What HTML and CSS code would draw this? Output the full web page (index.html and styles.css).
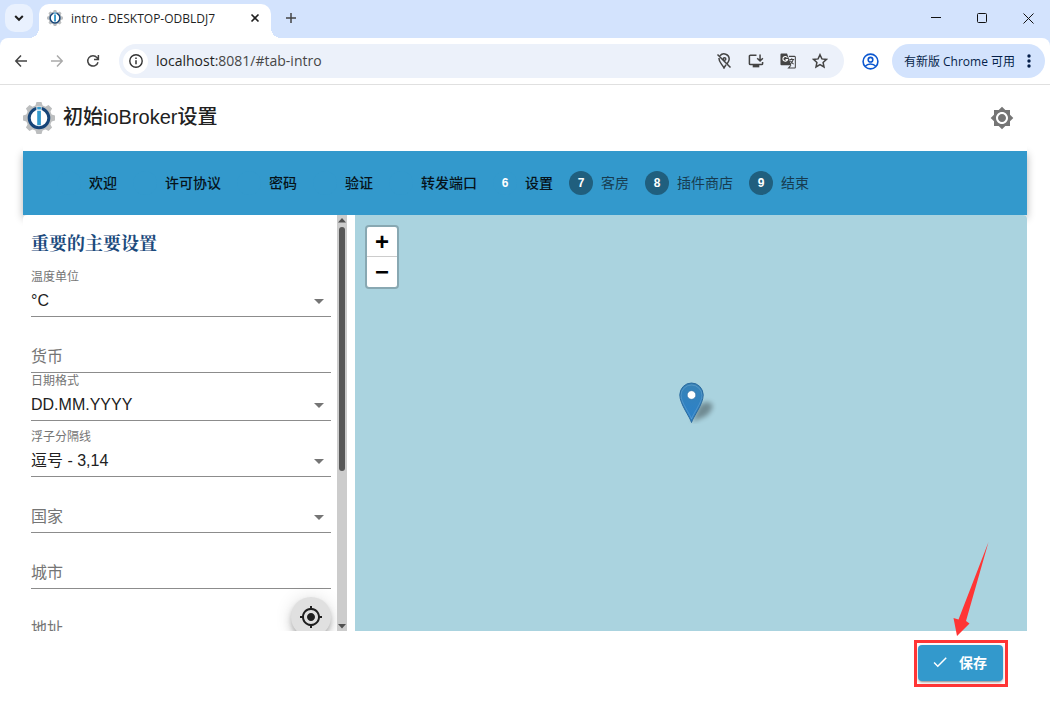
FILE: index.html
```
<!DOCTYPE html>
<html lang="zh-CN">
<head>
<meta charset="utf-8">
<title>intro - DESKTOP-ODBLDJ7</title>
<link rel="stylesheet" href="styles.css">
</head>
<body>
<svg class="defs" aria-hidden="true">
  <symbol id="logo" viewBox="0 0 32 32">
    <g fill="#bcbebf">
      <circle cx="16" cy="16" r="13"/>
      <path d="M12 5l1.500-5h5L20 5zM12 27l1.500 5h5l1.500-5z"/>
      <path transform="rotate(45 16 16)" d="M12 5l1.500-5h5L20 5zM12 27l1.500 5h5l1.500-5z"/>
      <path transform="rotate(90 16 16)" d="M12 5l1.500-5h5L20 5zM12 27l1.500 5h5l1.500-5z"/>
      <path transform="rotate(135 16 16)" d="M12 5l1.500-5h5L20 5zM12 27l1.500 5h5l1.500-5z"/>
    </g>
    <circle cx="16" cy="16" r="9.800" fill="#fff" stroke="#164477" stroke-width="3"/>
    <path d="M13.400 4.500h5.200v5h-5.200z" fill="#fff"/>
    <path d="M14.200 5h3.700v2.400h-3.700zM14.200 8.800h3.700v14.400h-3.700z" fill="#3399cc"/>
  </symbol>
</svg>

<header class="browser">
  <div class="tabbar">
    <button class="tab-search" aria-label="搜索标签页"><svg width="12" height="12" viewBox="0 0 12 12"><path d="M2.2 4L6 7.8 9.8 4" fill="none" stroke="#1f1f1f" stroke-width="2"/></svg></button>
    <div class="tab">
      <svg width="16" height="16"><use href="#logo"/></svg>
      <span class="tab-title">intro - DESKTOP-ODBLDJ7</span>
      <button class="bare" aria-label="关闭标签页"><svg width="10" height="10" viewBox="0 0 10 10"><path d="M1.500 1.500l7 7M8.500 1.500l-7 7" stroke="#1f1f1f" stroke-width="1.600"/></svg></button>
    </div>
    <button class="bare new-tab" aria-label="新标签页"><svg width="12" height="12" viewBox="0 0 12 12"><path d="M6 1v10M1 6h10" stroke="#444" stroke-width="1.500"/></svg></button>
    <div class="window-buttons">
      <button class="bare" aria-label="最小化"><svg width="10" height="10"><path d="M0 4.500h10" stroke="#111"/></svg></button>
      <button class="bare" aria-label="最大化"><svg width="10" height="10"><rect x=".5" y=".5" width="9" height="9" rx="1" fill="none" stroke="#111"/></svg></button>
      <button class="bare" aria-label="关闭"><svg width="11" height="11"><path d="M.5.5l10 10M10.500.500l-10 10" stroke="#111"/></svg></button>
    </div>
  </div>
  <div class="toolbar">
    <nav class="nav">
      <button class="bare" aria-label="后退"><svg width="14" height="14" viewBox="0 0 14 14"><path d="M7 1.500L1.800 7 7 12.500M2 7h11" fill="none" stroke="#444" stroke-width="1.500"/></svg></button>
      <button class="bare" aria-label="前进"><svg width="14" height="14" viewBox="0 0 14 14"><path d="M7 1.500L12.200 7 7 12.500M12 7H1" fill="none" stroke="#aaa" stroke-width="1.500"/></svg></button>
      <button class="bare" aria-label="重新加载"><svg width="14" height="14" viewBox="0 0 14 14"><path d="M12 8.200A5.200 5.200 0 1 1 11 3.600L12 5M12.400 1v4.400H8" fill="none" stroke="#444" stroke-width="1.500"/></svg></button>
    </nav>
    <div class="omnibox">
      <button class="bare site-info" aria-label="网站信息"><svg width="14" height="14" viewBox="0 0 14 14"><circle cx="7" cy="7" r="6.200" fill="none" stroke="#333" stroke-width="1.400"/><path d="M7 6.200v4M7 3.500v1.600" stroke="#333" stroke-width="1.500"/></svg></button>
      <span class="url"><b>localhost</b>:8081/#tab-intro</span>
      <button class="bare" aria-label="位置"><svg width="16" height="16" viewBox="0 0 16 16" fill="none" stroke="#444" stroke-width="1.500"><path d="M4 2.800A5.200 5.200 0 0 1 13.200 6c0 1.700-.8 3-1.800 4.400M3 5c-.4 4 3 5.800 5 10 .6-1.300 1.300-2.300 2-3.300M1.500 1.500l13 13"/><circle cx="8.500" cy="6" r="1.300"/></svg></button>
      <button class="bare" aria-label="安装"><svg width="16" height="16" viewBox="0 0 17 16" fill="none" stroke="#444" stroke-width="1.600"><path d="M9 1.800H2.500a1 1 0 0 0-1 1v8a1 1 0 0 0 1 1h12a1 1 0 0 0 1-1V9M12.800 1v6.500M9.800 5l3 3 3-3"/><path d="M5 13.500h7" stroke-width="2.500"/></svg></button>
      <button class="bare" aria-label="翻译"><svg width="16" height="16" viewBox="0 0 17 17"><path d="M1.500.5h6L12 13H1.500a1 1 0 0 1-1-1V1.500a1 1 0 0 1 1-1z" fill="#444"/><path d="M7.800 5A2.500 2.500 0 1 0 8 7H5.800" fill="none" stroke="#fff" stroke-width="1.200"/><path d="M9.500 3.600h6a.8.8 0 0 1 .8.8v10.800a.8.8 0 0 1-.8.8H9l2.600-3M10 7h5M12.500 5.500V7M14 7c-.5 2-1.700 3.500-3 4.500M11 8.200c.8 1.500 2 2.700 3.500 3.600" fill="none" stroke="#444" stroke-width="1.100"/></svg></button>
      <button class="bare" aria-label="收藏"><svg width="16" height="16" viewBox="0 0 16 16"><path d="M8 1.700l1.900 4.200 4.600.5-3.400 3.100.9 4.500L8 11.700 4 14l.9-4.500L1.500 6.400l4.600-.5z" fill="none" stroke="#444" stroke-width="1.500"/></svg></button>
    </div>
    <button class="bare profile" aria-label="个人资料"><svg width="17" height="17" viewBox="0 0 17 17" fill="none" stroke="#0b57d0" stroke-width="1.600"><circle cx="8.500" cy="8.500" r="7.400"/><circle cx="8.500" cy="6.700" r="2.300"/><path d="M3.300 13.300c2.500-3 7.900-3 10.400 0"/></svg></button>
    <button class="update"><span>有新版 Chrome 可用</span><svg width="4" height="16" fill="#041e49"><circle cx="2" cy="3" r="1.700"/><circle cx="2" cy="8" r="1.700"/><circle cx="2" cy="13" r="1.700"/></svg></button>
  </div>
</header>

<main class="page">
  <div class="page-head">
    <svg width="32" height="32"><use href="#logo"/></svg>
    <h1>初始ioBroker设置</h1>
    <button class="bare" aria-label="主题"><svg width="24" height="24" viewBox="0 0 24 24" fill="#757575"><path d="M20 15.310L23.310 12 20 8.690V4h-4.690L12 .69 8.690 4H4v4.690L.69 12 4 15.310V20h4.690L12 23.310 15.310 20H20v-4.690zM12 18c-3.310 0-6-2.690-6-6s2.690-6 6-6 6 2.690 6 6-2.690 6-6 6zm0-10c-2.210 0-4 1.790-4 4s1.790 4 4 4 4-1.790 4-4-1.790-4-4-4z"/></svg></button>
  </div>

  <section class="card">
    <ol class="stepper">
      <li class="done"><i></i>欢迎</li>
      <li class="done"><i></i>许可协议</li>
      <li class="done"><i></i>密码</li>
      <li class="done"><i></i>验证</li>
      <li class="done"><i></i>转发端口</li>
      <li class="active" aria-current="step"><i>6</i>设置</li>
      <li><i>7</i>客房</li>
      <li><i>8</i>插件商店</li>
      <li><i>9</i>结束</li>
    </ol>

    <div class="content">
      <form class="form" id="settings">
        <h2>重要的主要设置</h2>
        <div class="field"><label for="temp">温度单位</label><select id="temp"><option>°C</option></select></div>
        <div class="field empty flush"><label for="currency">货币</label><input id="currency" type="text"></div>
        <div class="field"><label for="date">日期格式</label><select id="date"><option>DD.MM.YYYY</option></select></div>
        <div class="field"><label for="float">浮子分隔线</label><select id="float"><option>逗号 - 3,14</option></select></div>
        <div class="field empty"><label for="country">国家</label><select id="country"><option></option></select></div>
        <div class="field empty"><label for="city">城市</label><input id="city" type="text"></div>
        <div class="address">
          <div class="field empty"><label for="address">地址</label><input id="address" type="text"></div>
          <button type="button" class="locate" aria-label="定位"><svg width="24" height="24" viewBox="0 0 24 24" fill="#1f1f1f"><path d="M12 8c-2.210 0-4 1.790-4 4s1.790 4 4 4 4-1.790 4-4-1.790-4-4-4zm8.940 3c-.46-4.170-3.770-7.480-7.940-7.940V1h-2v2.060C6.830 3.520 3.520 6.830 3.060 11H1v2h2.060c.46 4.170 3.770 7.480 7.940 7.940V23h2v-2.060c4.170-.46 7.480-3.770 7.940-7.940H23v-2h-2.060zM12 19c-3.870 0-7-3.130-7-7s3.130-7 7-7 7 3.130 7 7-3.130 7-7 7z"/></svg></button>
        </div>
      </form>
      <div class="scrollbar" aria-hidden="true">
        <svg width="8" height="12"><path d="M0 7.500L4 3l4 4.500z" fill="#505050"/></svg>
        <div class="track"><div class="thumb"></div></div>
        <svg width="8" height="10"><path d="M0 3l4 4.500L8 3z" fill="#505050"/></svg>
      </div>
      <div class="map">
        <div class="zoom"><button aria-label="放大">+</button><button aria-label="缩小">−</button></div>
        <svg class="marker" width="42" height="42" viewBox="0 0 42 42">
          <defs>
            <linearGradient id="pin" x1="0" y1="0" x2="0" y2="1"><stop offset="0" stop-color="#3883b7"/><stop offset="1" stop-color="#2a81cb"/></linearGradient>
            <filter id="soft" x="-50%" y="-50%" width="200%" height="200%"><feGaussianBlur stdDeviation="2.500"/></filter>
          </defs>
          <path d="M13 40L20 24q7-7 13-2 2 5-6 12z" fill="#000" opacity=".34" filter="url(#soft)"/>
          <path d="M12.500 40.500C11 35 .8 22 .8 13a11.700 12 0 0 1 23.400 0C24.200 22 14 35 12.500 40.500z" fill="url(#pin)" stroke="#2b6a9e"/>
          <path d="M12.500 37C10.500 31 2 20.500 2 13.500a10.500 10.500 0 0 1 21 0C23 20.500 14.500 31 12.500 37z" fill="none" stroke="#fff" stroke-opacity=".15"/>
          <circle cx="12.500" cy="13" r="4.300" fill="#fff" stroke="#2b6a9e" stroke-width=".6"/>
        </svg>
      </div>
    </div>

    <footer class="actions">
      <div class="callout">
        <button class="save" type="submit" form="settings"><svg width="18" height="18" viewBox="0 0 24 24" fill="#fff"><path d="M9 16.170L4.830 12l-1.420 1.410L9 19 21 7l-1.410-1.410z"/></svg>保存</button>
        <div class="frame"></div>
        <svg class="arrow" width="36" height="95" viewBox="0 0 36 95"><path d="M35.500 0L5.500 77.500.500 76 4 94 16.500 81.500 13 79z" fill="#ff3535"/></svg>
      </div>
    </footer>
  </section>
</main>
</body>
</html>
```
FILE: styles.css
```
* { box-sizing: border-box; }

body {
  margin: 0;
  height: 100vh;
  display: flex;
  flex-direction: column;
  overflow: hidden;
  background: #fff;
  color: #212121;
  font-family: "Liberation Sans", "Noto Sans CJK SC", sans-serif;
  font-size: 16px;
}

button, input, select { font: inherit; color: inherit; }
svg { display: block; flex: none; }
.defs { position: absolute; width: 0; height: 0; }
.bare { border: 0; padding: 0; background: none; display: grid; place-items: center; flex: none; }

/* Browser frame */
.browser { background: #d3e3fd; font-family: "Open Sans", "Noto Sans CJK SC", sans-serif; }
.tabbar { height: 38px; display: flex; align-items: flex-start; padding: 4px 5px 0; }
.tab-search { width: 28px; height: 28px; margin-right: 6px; padding: 0; border: 0; border-radius: 10px; background: #e9f1fe; display: grid; place-items: center; }
.tab { width: 232px; height: 34px; padding: 0 11px 6px 8px; display: flex; align-items: center; gap: 8px; background: #fff; border-radius: 10px 10px 0 0; position: relative; }
.tab::before, .tab::after { content: ""; position: absolute; bottom: 0; width: 10px; height: 10px; }
.tab::before { left: -10px; background: radial-gradient(circle at 0 0, transparent 10px, #fff 10px); }
.tab::after { right: -10px; background: radial-gradient(circle at 100% 0, transparent 10px, #fff 10px); }
.tab-title { flex: 1; font-size: 12px; color: #1f1f1f; white-space: nowrap; }
.new-tab { width: 28px; height: 28px; margin-left: 6px; }
.window-buttons { margin-left: auto; display: flex; }
.window-buttons button { width: 46px; height: 28px; }
.window-buttons button:last-child { width: 34px; margin-left: 6px; }

.toolbar { height: 47px; display: flex; align-items: center; padding: 0 5px 0 14px; background: #fff; border-radius: 8px 8px 0 0; border-bottom: 1px solid #e0e0e0; }
.nav { display: flex; gap: 22px; margin-right: 19px; }
.omnibox { flex: 1; height: 34px; display: flex; align-items: center; gap: 16px; padding: 0 16px 0 4px; border-radius: 17px; background: #ecf1fa; }
.site-info { width: 25px; height: 25px; border-radius: 50%; background: #fff; margin-right: -8px; }
.url { flex: 1; font-size: 14px; line-height: 20px; color: #474747; }
.url b { font-weight: 400; color: #1f1f1f; }
.profile { margin: 0 13px 0 18px; }
.update { height: 34px; padding: 0 14px 0 12px; border: 0; border-radius: 17px; background: #d3e3fd; color: #041e49; display: flex; align-items: center; gap: 12px; font-size: 12px; white-space: nowrap; }

/* Page */
.page { flex: 1; min-height: 0; display: flex; flex-direction: column; padding: 0 23px 28px; }
.page-head { height: 66px; flex: none; display: flex; align-items: center; gap: 8px; padding-right: 13px; background: #fff; position: relative; z-index: 1; }
.page-head h1 { flex: 1; margin: 0; padding-bottom: 2px; font-size: 20px; line-height: 24px; font-weight: 500; }
.card { flex: 1; min-height: 0; display: flex; flex-direction: column; border-radius: 4px; }

.stepper { height: 64px; flex: none; margin: 0; padding: 0 34px; list-style: none; display: flex; align-items: center; gap: 16px; background: #3399cc; font-size: 14px; line-height: 18px; color: #173c50; box-shadow: 0 3px 8px rgba(0, 0, 0, .3); }
.stepper li { display: grid; grid-template-columns: 24px auto; align-items: center; gap: 8px; white-space: nowrap; }
.stepper i { width: 24px; height: 24px; border-radius: 50%; display: grid; place-items: center; background: #205f7e; color: #fff; font: bold 12px "Liberation Sans", sans-serif; }
.stepper .done, .stepper .active { font-weight: 500; color: #06131a; }
.stepper .done i, .stepper .active i { background: #3399cc; }

.content { flex: 1; min-height: 0; display: flex; background: #fff; position: relative; border-radius: 4px 4px 0 0; overflow: hidden; }
.form { width: 314px; padding: 15px 6px 0 8px; overflow: hidden; }
.form h2 { margin: 0 0 15px; font-family: "Noto Serif CJK SC", "Noto Sans CJK SC", serif; font-size: 18px; line-height: 24px; font-weight: 700; color: #1b4a7c; }
.field { display: grid; grid-template-rows: 16px 32px; margin-bottom: 8px; }
.field.flush { margin-bottom: 0; }
.field label { grid-area: 1 / 1; font-size: 12px; line-height: 16px; color: #757575; }
.field.empty label { grid-area: 2 / 1; font-size: 16px; line-height: 31px; }
.field input, .field select { grid-area: 2 / 1; width: 100%; height: 32px; padding: 0; border: 0; border-bottom: 1px solid #8c8c8c; border-radius: 0; background: transparent; appearance: none; outline: 0; }
.field select { background: url('data:image/svg+xml,<svg xmlns="http://www.w3.org/2000/svg" width="10" height="5"><path d="M0 0h10L5 5z" fill="%23757575"/></svg>') no-repeat right 7px top 14px; }
.address { display: flex; }
.address .field { flex: 1; min-width: 0; }
.locate { width: 40px; height: 40px; flex: none; padding: 0; border: 0; border-radius: 50%; display: grid; place-items: center; background: #e0e0e0; box-shadow: 0 3px 5px -1px rgba(0, 0, 0, .2), 0 6px 10px rgba(0, 0, 0, .14), 0 1px 18px rgba(0, 0, 0, .12); }

.scrollbar { width: 10px; flex: none; display: flex; flex-direction: column; align-items: center; background: #ccc; }
.track { flex: 1; width: 6px; }
.thumb { height: 62%; border-radius: 3px; background: #575757; }

.map { flex: 1; margin-left: 8px; padding: 10px; background: #aad3df; position: relative; }
.zoom { width: 34px; border: 2px solid rgba(0, 0, 0, .2); border-radius: 4px; background: #fff; background-clip: padding-box; display: flex; flex-direction: column; }
.zoom button { height: 30px; padding: 0; border: 0; background: none; color: #000; font-size: 24px; line-height: 28px; font-weight: 700; }
.zoom button:first-child { border-bottom: 1px solid #ccc; }
.marker { position: absolute; left: calc(50% - 12px); top: calc(50% - 41px); }

.actions { height: 63px; flex: none; display: flex; justify-content: flex-end; align-items: flex-start; padding: 14px 24px; }
.callout { position: relative; }
.save { height: 36px; padding: 0 16px 2px 13px; border: 0; border-radius: 4px; display: flex; align-items: center; gap: 10px; background: #3399cc; color: #fff; font-size: 14px; font-weight: 700; box-shadow: 0 3px 1px -2px rgba(0, 0, 0, .2), 0 2px 2px rgba(0, 0, 0, .14), 0 1px 5px rgba(0, 0, 0, .12); }
.frame { position: absolute; inset: -5px -5px -6px -4px; border: 3px solid #ff3535; pointer-events: none; }
.arrow { position: absolute; right: 14px; bottom: 44px; pointer-events: none; }
```
